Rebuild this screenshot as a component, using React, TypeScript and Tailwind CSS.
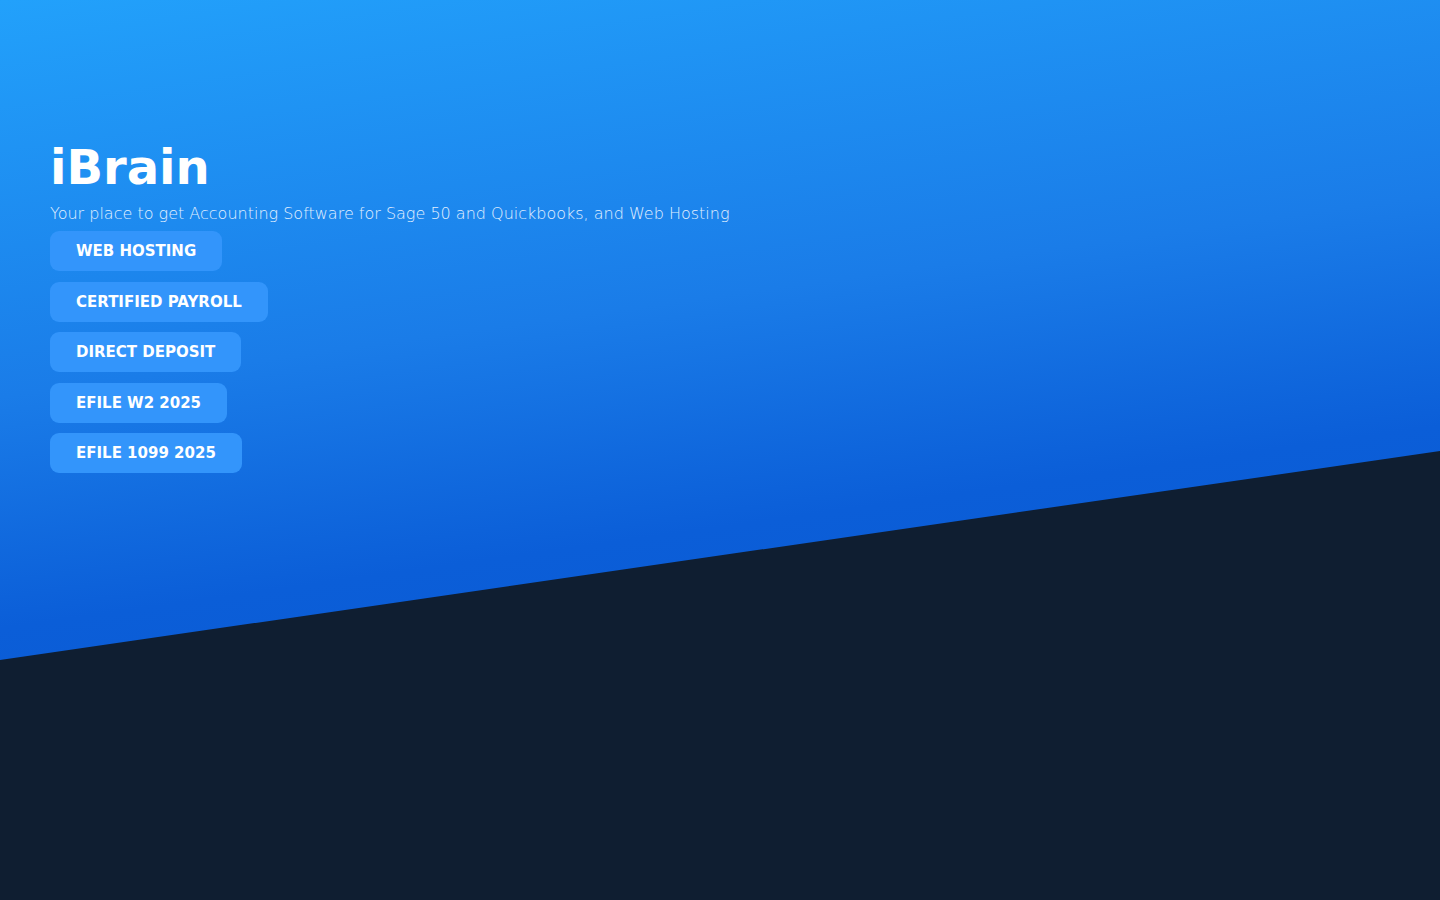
import React from 'react';

const links = ['Web Hosting', 'Certified Payroll', 'Direct Deposit', 'eFile W2 2025', 'eFile 1099 2025'];

export default function App() {
  return (
    <div
      className="relative h-[900px] w-full overflow-hidden bg-[linear-gradient(172deg,#22a1fb_0%,#1a7ce8_36%,#0b5ed8_57%,#0a52cc_100%)]"
      style={{ fontFamily: '"DejaVu Sans", Verdana, sans-serif' }}
    >
      {/* dark slanted band */}
      <div className="absolute inset-0 bg-[#0f1e31] [clip-path:polygon(0_660px,100%_451px,100%_100%,0_100%)]" />

      <div className="relative flex flex-col items-start px-[50px] pt-[143px]">
        <h1 className="text-[48px] font-bold leading-[48px] text-white">iBrain</h1>
        <p className="mt-[11px] text-[16px] font-light leading-[24px] text-[#e2f0ff]">
          Your place to get Accounting Software for Sage 50 and Quickbooks, and Web Hosting
        </p>
        <div className="mt-[5px] flex flex-col items-start gap-[10.5px]">
          {links.map((l) => (
            <a
              key={l}
              href="#"
              className="block rounded-[9px] bg-[#3395fb] px-[26px] py-[9px] text-[15px] font-bold uppercase leading-[22px] text-white"
            >
              {l}
            </a>
          ))}
        </div>
      </div>
    </div>
  );
}
